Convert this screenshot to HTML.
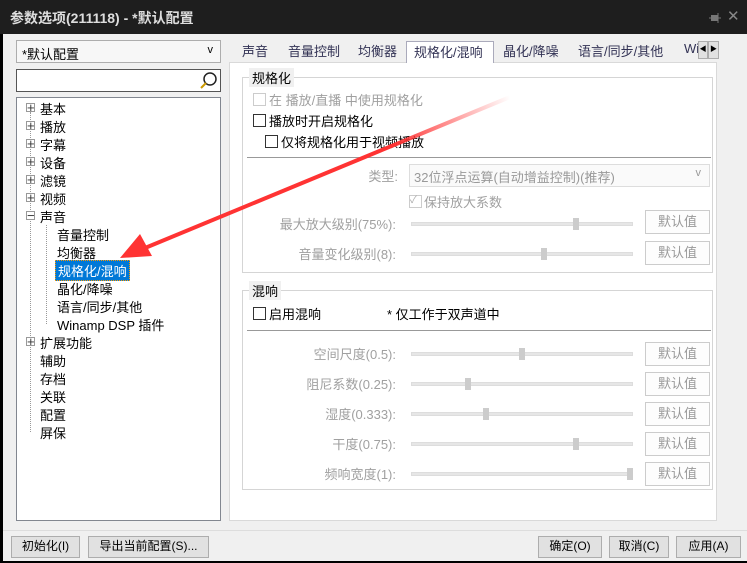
<!DOCTYPE html><html><head><meta charset="utf-8"><style>
*{box-sizing:border-box;margin:0;padding:0}
body{width:747px;height:563px;background:#000;position:relative;overflow:hidden;font-family:"Liberation Sans","Noto Sans CJK SC",sans-serif;font-size:13px;color:#000}
.a{position:absolute;white-space:nowrap}
.win{left:3px;top:34px;width:744px;height:527px;background:#f0f0f0}
.title{left:0;top:0;width:747px;height:34px;background:#1e1e1e;color:#ddd;font-size:14px;font-weight:bold;padding:8px 0 0 10px}
.box{border:1px solid #828790;background:#fff}
.btn{border:1px solid #adadad;background:#e1e1e1;text-align:center;font-size:12px;line-height:19px}
.dbtn{border:1px solid #ccc;background:#fdfdfd;color:#999;text-align:center;line-height:21px;font-size:13px}
.dis{color:#a0a0a0}
.cb{width:13px;height:13px;border:1px solid #333;background:#fff}
.grp{border:1px solid #d5d5d5}
.gt{background:#f0f0f0;padding:0 3px}
.trk{height:4px;background:#e6e6e6;border:1px solid #ddd;width:222px;left:411px}
.th{width:6px;height:12px;background:#ccc}
.tree{width:747px;height:563px}
.tree div{position:absolute;font-size:13px;white-space:nowrap}
.pm{width:9px;height:9px;border:1px solid #999;background:#fff;font-size:9px;line-height:7px;text-align:center;color:#333}
</style></head><body>
<div class="a title">参数选项(211118) - *默认配置</div>
<svg class="a" style="left:708px;top:12px" width="14" height="12"><rect x="3" y="3" width="7" height="6" fill="#777"/><line x1="1" y1="6" x2="13" y2="6" stroke="#777"/><line x1="10" y1="1" x2="10" y2="11" stroke="#777"/></svg>
<div class="a" style="left:727px;top:7px;color:#888;font-size:15px">✕</div>
<div class="a win"></div>
<!-- left -->
<div class="a box" style="left:16px;top:40px;width:205px;height:23px;border-color:#adadad;background:#f7f7f7;padding:3px 5px">*默认配置<span style="position:absolute;right:7px;top:3px;font-size:11px">v</span></div>
<div class="a box" style="left:16px;top:69px;width:205px;height:23px;border-color:#555"></div>
<svg class="a" style="left:199px;top:71px" width="20" height="19"><circle cx="11" cy="8" r="6" fill="none" stroke="#222" stroke-width="1.5"/><line x1="7" y1="12" x2="2" y2="17" stroke="#c90" stroke-width="2"/></svg>
<div class="a box" style="left:16px;top:97px;width:205px;height:424px"></div>
<div class="a tree" style="left:0;top:0">
<div style="left:30px;top:112px;width:1px;height:230px;border-left:1px dotted #999"></div>
<div style="left:46px;top:225px;width:1px;height:99px;border-left:1px dotted #999"></div>
<div style="left:30px;top:342px;width:1px;height:90px;border-left:1px dotted #999"></div>
<div class="pm" style="left:26px;top:103px">+</div><div style="left:40px;top:99px">基本</div>
<div class="pm" style="left:26px;top:121px">+</div><div style="left:40px;top:117px">播放</div>
<div class="pm" style="left:26px;top:139px">+</div><div style="left:40px;top:135px">字幕</div>
<div class="pm" style="left:26px;top:157px">+</div><div style="left:40px;top:153px">设备</div>
<div class="pm" style="left:26px;top:175px">+</div><div style="left:40px;top:171px">滤镜</div>
<div class="pm" style="left:26px;top:193px">+</div><div style="left:40px;top:189px">视频</div>
<div class="pm" style="left:26px;top:211px">−</div><div style="left:40px;top:207px">声音</div>
<div style="left:57px;top:225px">音量控制</div>
<div style="left:57px;top:243px">均衡器</div>
<div style="left:55px;top:260px;background:#0078d7;color:#fff;padding:0 2px;border:1px dotted #f90">规格化/混响</div>
<div style="left:57px;top:279px">晶化/降噪</div>
<div style="left:57px;top:297px">语言/同步/其他</div>
<div style="left:57px;top:315px">Winamp DSP 插件</div>
<div class="pm" style="left:26px;top:337px">+</div><div style="left:40px;top:333px">扩展功能</div>
<div style="left:40px;top:351px">辅助</div>
<div style="left:40px;top:369px">存档</div>
<div style="left:40px;top:387px">关联</div>
<div style="left:40px;top:405px">配置</div>
<div style="left:40px;top:423px">屏保</div>
</div>
<!-- tabs -->
<div class="a" style="left:229px;top:62px;width:488px;height:459px;background:#fff;border:1px solid #d9d9d9"></div>
<div class="a" style="left:406px;top:41px;width:88px;height:22px;background:#fff;border:1px solid #aab;border-bottom:none"></div>
<div class="a" style="top:41px;left:242px;color:#335">声音</div>
<div class="a" style="top:41px;left:288px;color:#335">音量控制</div>
<div class="a" style="top:41px;left:358px;color:#335">均衡器</div>
<div class="a" style="top:42px;left:414px;color:#335">规格化/混响</div>
<div class="a" style="top:41px;left:503px;color:#335">晶化/降噪</div>
<div class="a" style="top:41px;left:578px;color:#335">语言/同步/其他</div>
<div class="a" style="top:41px;left:684px;color:#335">Wi</div>
<div class="a btn" style="left:698px;top:41px;width:10px;height:18px;font-size:7px;line-height:16px">◀</div>
<div class="a btn" style="left:708px;top:41px;width:11px;height:18px;font-size:7px;line-height:16px">▶</div>
<!-- group1 -->
<div class="a grp" style="left:242px;top:77px;width:471px;height:196px"></div>
<div class="a gt" style="left:249px;top:68px">规格化</div>
<div class="a cb" style="left:253px;top:93px;border-color:#ccc"></div><div class="a dis" style="left:269px;top:90px">在 播放/直播 中使用规格化</div>
<div class="a cb" style="left:253px;top:114px"></div><div class="a" style="left:269px;top:111px">播放时开启规格化</div>
<div class="a cb" style="left:265px;top:135px"></div><div class="a" style="left:281px;top:132px">仅将规格化用于视频播放</div>
<div class="a" style="left:247px;top:157px;width:464px;height:1px;background:#999"></div>
<div class="a dis" style="left:300px;top:166px;width:98px;text-align:right">类型:</div>
<div class="a" style="left:409px;top:164px;width:301px;height:23px;border:1px solid #ddd;background:#fafafa;color:#999;padding:2px 4px">32位浮点运算(自动增益控制)(推荐)<span style="position:absolute;right:8px;top:2px;font-size:11px">v</span></div>
<div class="a cb" style="left:409px;top:195px;border-color:#ccc;font-size:10px;line-height:10px;color:#aaa">✓</div><div class="a dis" style="left:424px;top:192px">保持放大系数</div>
<div class="a dis" style="left:250px;top:214px;width:146px;text-align:right">最大放大级别(75%):</div>
<div class="a trk" style="top:222px"></div><div class="a th" style="left:573px;top:218px"></div>
<div class="a dbtn" style="left:645px;top:210px;width:65px;height:24px">默认值</div>
<div class="a dis" style="left:250px;top:244px;width:146px;text-align:right">音量变化级别(8):</div>
<div class="a trk" style="top:252px"></div><div class="a th" style="left:541px;top:248px"></div>
<div class="a dbtn" style="left:645px;top:241px;width:65px;height:24px">默认值</div>
<!-- group2 -->
<div class="a grp" style="left:242px;top:290px;width:471px;height:200px"></div>
<div class="a gt" style="left:249px;top:281px">混响</div>
<div class="a cb" style="left:253px;top:307px"></div><div class="a" style="left:269px;top:304px">启用混响</div>
<div class="a" style="left:387px;top:304px">* 仅工作于双声道中</div>
<div class="a" style="left:247px;top:330px;width:464px;height:1px;background:#999"></div>
<div class="a dis" style="left:250px;top:344px;width:146px;text-align:right">空间尺度(0.5):</div>
<div class="a trk" style="top:352px"></div><div class="a th" style="left:519px;top:348px"></div>
<div class="a dbtn" style="left:645px;top:342px;width:65px;height:24px">默认值</div>
<div class="a dis" style="left:250px;top:374px;width:146px;text-align:right">阻尼系数(0.25):</div>
<div class="a trk" style="top:382px"></div><div class="a th" style="left:465px;top:378px"></div>
<div class="a dbtn" style="left:645px;top:372px;width:65px;height:24px">默认值</div>
<div class="a dis" style="left:250px;top:404px;width:146px;text-align:right">湿度(0.333):</div>
<div class="a trk" style="top:412px"></div><div class="a th" style="left:483px;top:408px"></div>
<div class="a dbtn" style="left:645px;top:402px;width:65px;height:24px">默认值</div>
<div class="a dis" style="left:250px;top:434px;width:146px;text-align:right">干度(0.75):</div>
<div class="a trk" style="top:442px"></div><div class="a th" style="left:573px;top:438px"></div>
<div class="a dbtn" style="left:645px;top:432px;width:65px;height:24px">默认值</div>
<div class="a dis" style="left:250px;top:464px;width:146px;text-align:right">频响宽度(1):</div>
<div class="a trk" style="top:472px"></div><div class="a th" style="left:627px;top:468px"></div>
<div class="a dbtn" style="left:645px;top:462px;width:65px;height:24px">默认值</div>
<!-- bottom -->
<div class="a" style="left:3px;top:530px;width:744px;height:1px;background:#ddd"></div>
<div class="a btn" style="left:11px;top:536px;width:69px;height:22px">初始化(I)</div>
<div class="a btn" style="left:88px;top:536px;width:121px;height:22px">导出当前配置(S)...</div>
<div class="a btn" style="left:538px;top:536px;width:64px;height:22px">确定(O)</div>
<div class="a btn" style="left:609px;top:536px;width:60px;height:22px">取消(C)</div>
<div class="a btn" style="left:676px;top:536px;width:65px;height:22px">应用(A)</div>
<!-- arrow -->
<svg class="a" style="left:0;top:0" width="747" height="563"><defs><linearGradient id="g" x1="510" y1="97" x2="120" y2="258" gradientUnits="userSpaceOnUse"><stop offset="0" stop-color="#f33" stop-opacity="0"/><stop offset="0.3" stop-color="#f33"/><stop offset="1" stop-color="#f33"/></linearGradient></defs>
<line x1="510" y1="97" x2="145" y2="248" stroke="url(#g)" stroke-width="4"/>
<polygon points="120,258 140,234 152,256" fill="#f33"/></svg>
</body></html>
